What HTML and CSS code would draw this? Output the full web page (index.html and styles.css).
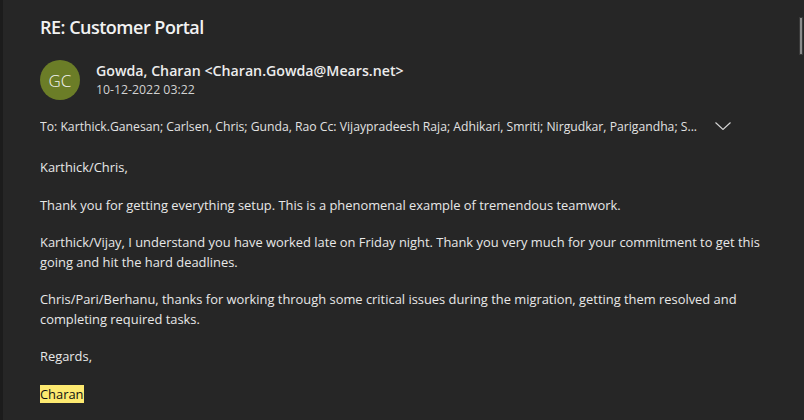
FILE: index.html
```
<!DOCTYPE html>
<html>
<head>
<meta charset="utf-8">
<link rel="stylesheet" href="styles.css">
</head>
<body>
<div class="pane">
  <div class="edge"></div>
  <main class="mail">
    <h1 class="subject">RE: Customer Portal</h1>
    <div class="sender">
      <div class="avatar">GC</div>
      <div class="who">
        <div class="name">Gowda, Charan &lt;Charan.Gowda@Mears.net&gt;</div>
        <div class="date">10-12-2022 03:22</div>
      </div>
    </div>
    <div class="recips">
      <span class="recips-text">To: Karthick.Ganesan; Carlsen, Chris; Gunda, Rao Cc: Vijaypradeesh Raja; Adhikari, Smriti; Nirgudkar, Parigandha; S...</span>
      <svg class="chev" width="16" height="8" viewBox="0 0 16 8"><path d="M0.5 0.5 L8 7.5 L15.5 0.5" fill="none" stroke="#d6d6d6" stroke-width="1.1"/></svg>
    </div>
    <div class="body">
      <p>Karthick/Chris,</p>
      <p>Thank you for getting everything setup. This is a phenomenal example of tremendous teamwork.</p>
      <p>Karthick/Vijay, I understand you have worked late on Friday night. Thank you very much for your commitment to get this going and hit the hard deadlines.</p>
      <p>Chris/Pari/Berhanu, thanks for working through some critical issues during the migration, getting them resolved and completing required tasks.</p>
      <p>Regards,</p>
      <p><mark class="hl">Charan</mark></p>
    </div>
  </main>
  <div class="scrollbar"><div class="thumb"></div></div>
</div>
</body>
</html>
```
FILE: styles.css
```
html, body {
  margin: 0;
  padding: 0;
  background: #262626;
}
body {
  width: 804px;
  height: 420px;
  overflow: hidden;
  font-family: "Open Sans", "Noto Sans", sans-serif;
  color: #e6e6e6;
}
.pane {
  display: flex;
  height: 420px;
}
.edge {
  width: 3px;
  flex: none;
  background: #1c1c1c;
}
.mail {
  flex: 1;
  padding: 0 0 0 37px;
}
.subject {
  margin: 0;
  padding-top: 14px;
  font-size: 18px;
  letter-spacing: -0.5px;
  line-height: 26px;
  font-weight: 600;
  color: #f2f2f2;
}
.sender {
  display: flex;
  align-items: center;
  gap: 16px;
  margin-top: 20px;
}
.avatar {
  width: 40px;
  height: 40px;
  border-radius: 50%;
  background: #6b7d27;
  color: #f4f4f4;
  display: flex;
  align-items: center;
  justify-content: center;
  font-size: 17px;
  font-weight: 300;
  flex: none;
}
.name {
  font-size: 14.2px;
  line-height: 19px;
  font-weight: 600;
  color: #ececec;
}
.date {
  font-size: 12.3px;
  line-height: 19px;
  color: #d2d2d2;
}
.recips {
  display: flex;
  align-items: center;
  margin-top: 17px;
  height: 18px;
  font-size: 12.2px;
  color: #e2e2e2;
}
.recips-text {
  white-space: nowrap;
  width: 675px;
  overflow: hidden;
}
.chev {
  flex: none;
}
.body {
  margin-top: 23px;
  width: 740px;
  font-size: 12.9px;
  line-height: 19.5px;
  color: #e8e8e8;
}
.body p {
  margin: 0 0 18px 0;
}
.hl {
  background: #fde970;
  color: #111;
  padding: 0;
}
.scrollbar {
  width: 5px;
  flex: none;
  position: relative;
}
.thumb {
  position: absolute;
  left: 0;
  top: 17px;
  width: 2px;
  height: 36px;
  background: #8c8c8c;
  border: 1px solid #3a3a3a;
}
```
